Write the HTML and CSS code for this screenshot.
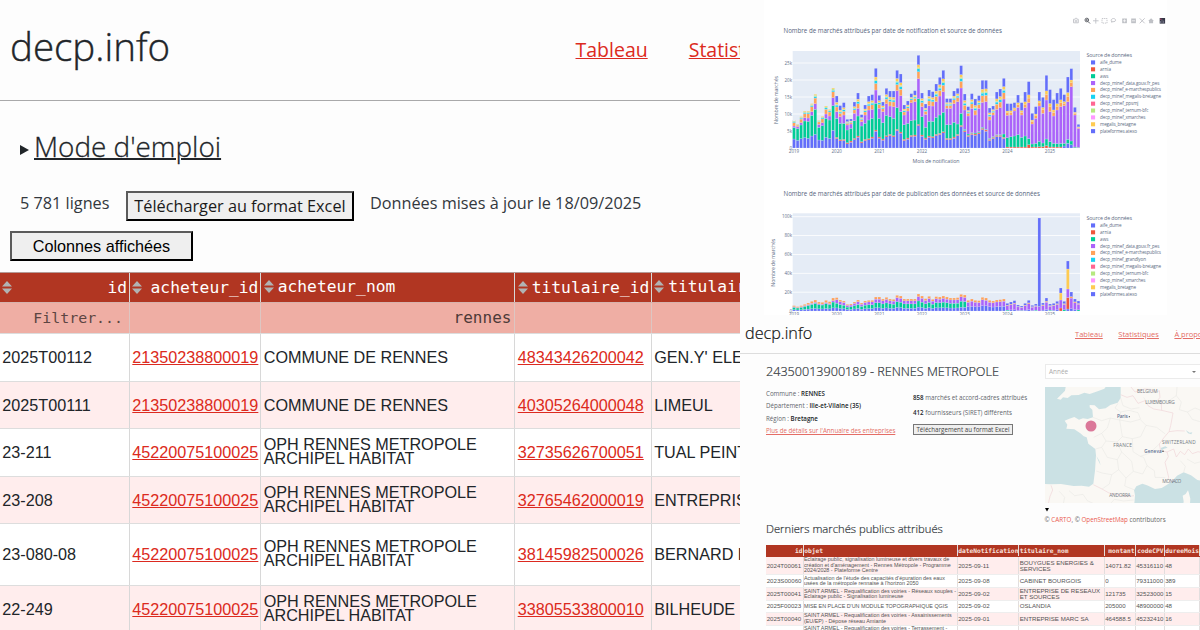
FILE: index.html
```html
<!DOCTYPE html>
<html lang="fr">
<head>
<meta charset="utf-8">
<title>decp.info</title>
<link rel="stylesheet" href="styles.css">
</head>
<body>
<main class="board">
  <section class="explorer">
    <header class="topbar">
      <div class="brand">decp.info</div>
      <nav class="nav"><a>Tableau</a><a>Statistiques</a></nav>
    </header>
    <div class="help"><svg class="tri" viewBox="0 0 9 10"><path d="M0 0L9 5L0 10Z"/></svg><span class="help-title">Mode d'emploi</span></div>
    <div class="tools"><span class="count">5 781 lignes</span><button class="btn download">Télécharger au format Excel</button><span class="updated">Données mises à jour le 18/09/2025</span></div>
    <button class="btn columns">Colonnes affichées</button>
    <div class="grid">
      <div class="row head">
        <div class="c right"><svg class="sort" viewBox="0 0 10 13"><path d="M0 5.5L5 0L10 5.5ZM0 7.5L5 13L10 7.5Z"/></svg>id</div>
        <div class="c right"><svg class="sort" viewBox="0 0 10 13"><path d="M0 5.5L5 0L10 5.5ZM0 7.5L5 13L10 7.5Z"/></svg>acheteur_id</div>
        <div class="c up"><svg class="sort" viewBox="0 0 10 13"><path d="M0 5.5L5 0L10 5.5ZM0 7.5L5 13L10 7.5Z"/></svg>acheteur_nom</div>
        <div class="c right"><svg class="sort" viewBox="0 0 10 13"><path d="M0 5.5L5 0L10 5.5ZM0 7.5L5 13L10 7.5Z"/></svg>titulaire_id</div>
        <div class="c up"><svg class="sort" viewBox="0 0 10 13"><path d="M0 5.5L5 0L10 5.5ZM0 7.5L5 13L10 7.5Z"/></svg>titulaire_nom</div>
      </div>
      <div class="row filter"><div class="c hint">Filtrer...</div><div class="c"></div><div class="c">rennes</div><div class="c"></div><div class="c"></div></div>
      <div class="row"><div class="c">2025T00112</div><div class="c"><a>21350238800019</a></div><div class="c">COMMUNE DE RENNES</div><div class="c"><a>48343426200042</a></div><div class="c">GEN.Y' ELEC</div></div>
      <div class="row odd"><div class="c">2025T00111</div><div class="c"><a>21350238800019</a></div><div class="c">COMMUNE DE RENNES</div><div class="c"><a>40305264000048</a></div><div class="c">LIMEUL</div></div>
      <div class="row"><div class="c">23-211</div><div class="c"><a>45220075100025</a></div><div class="c two">OPH RENNES METROPOLE<br>ARCHIPEL HABITAT</div><div class="c"><a>32735626700051</a></div><div class="c">TUAL PEINTURE</div></div>
      <div class="row odd"><div class="c">23-208</div><div class="c"><a>45220075100025</a></div><div class="c two">OPH RENNES METROPOLE<br>ARCHIPEL HABITAT</div><div class="c"><a>32765462000019</a></div><div class="c">ENTREPRISE</div></div>
      <div class="row tall"><div class="c">23-080-08</div><div class="c"><a>45220075100025</a></div><div class="c two">OPH RENNES METROPOLE<br>ARCHIPEL HABITAT</div><div class="c"><a>38145982500026</a></div><div class="c">BERNARD ET</div></div>
      <div class="row odd"><div class="c">22-249</div><div class="c"><a>45220075100025</a></div><div class="c two">OPH RENNES METROPOLE<br>ARCHIPEL HABITAT</div><div class="c"><a>33805533800010</a></div><div class="c">BILHEUDE</div></div>
    </div>
  </section>

  <div class="side">
    <section class="stats">
      <svg id="stats" class="stats-svg" viewBox="764 0 403 315"></svg>
    </section>

    <section class="buyer">
      <header class="mini-top">
        <div class="mini-brand">decp.info</div>
        <nav class="mini-nav"><a>Tableau</a><a>Statistiques</a><a>À propos</a></nav>
      </header>
      <div class="profile">
        <div class="facts">
          <h2 class="name">24350013900189 - RENNES METROPOLE</h2>
          <div class="cols">
            <div class="ident">
              <p>Commune : <b>RENNES</b></p>
              <p>Département : <b>Ille-et-Vilaine (35)</b></p>
              <p>Région : <b>Bretagne</b></p>
              <p><a class="soft">Plus de détails sur l'Annuaire des entreprises</a></p>
            </div>
            <div class="totals">
              <p><b>858</b> marchés et accord-cadres attribués</p>
              <p><b>412</b> fournisseurs (SIRET) différents</p>
              <button class="mini-btn">Téléchargement au format Excel</button>
            </div>
          </div>
        </div>
        <div class="where">
          <div class="select"><span>Année</span><i class="caret"></i></div>
          <svg class="map" viewBox="44 139 468 350">
            <rect x="44" y="139" width="468" height="350" fill="#faf8f4"/>
            <path fill="#cbe1e4" d="M44 139H106L104 150L92 162L80 174L91 177L98 170L112 172L123 164L145 163L162 156L178 160L204 151L222 144L226 139H271V172L262 186L240 193L226 203L206 206L193 194L178 193L178 200L186 207L188 230L172 235L158 233L146 237L132 229L115 235L103 240L111 252L108 264L132 266L150 278L160 287L169 290L174 309L195 325L197 344L194 390L189 429L176 438L154 435L130 436L92 430L62 431L44 430Z"/>
            <path fill="#cbe1e4" d="M312 489L314 464L311 449L318 437L336 429L350 434L374 445L394 442L410 432L424 423L440 405L460 395L482 404L501 418L512 420V489H479L480 474L475 455L473 449L466 460L457 465L460 482L459 489Z"/>
            <path fill="#cbe1e4" d="M466 268L478 276L486 275L483 281L473 278ZM391 322L405 317L412 321L401 324L394 329ZM198 346L207 360L211 374L204 360Z"/>
            <g fill="none" stroke="#f0d4d8" stroke-width="2">
              <path d="M271 162L290 170L308 165L323 188L344 180L353 195L370 205L394 209L428 217L421 255L416 273L400 292L387 310L391 330L410 334L414 348L404 365L410 389L415 410L409 425"/>
              <path d="M302 139L314 154L342 145L360 146L376 155L387 150L389 170L381 180L393 190L394 209M416 273L440 270L463 271M410 334L430 325L438 349L450 332L463 342L474 325L486 339L503 333L512 335M189 432L215 445L236 457L263 462L291 468L311 465M62 434L67 448L59 467L54 489"/>
            </g>
            <g fill="none" stroke="#e7e7e3" stroke-width="1.6">
              <path d="M188 230L214 240L240 232L268 238L301 244L329 236L347 254L379 260L405 280M268 238L271 214L254 202L263 188M271 214L296 209L323 216L331 236M271 172L278 195L303 205L327 201M190 290L214 278L231 262L240 232M214 278L227 301L214 320L195 325M227 301L260 304L276 288L268 238M260 304L274 334L261 357L231 350L214 320M276 288L306 294L331 288L347 254M306 294L308 333L330 347L357 338L387 310M261 357L265 387L244 402L215 397L198 391M265 387L287 412L283 436L311 447M287 412L309 392L337 400L350 375L340 350L330 347M350 375L372 390L374 410L405 411M309 392L304 362L274 334M244 402L237 430L215 445M87 452L103 470L99 489M116 450L133 465L158 461L171 480L190 489M340 170L352 190M440 139L438 165L453 184L447 207L471 214L486 236L512 244M471 214L494 202L512 209M438 165L410 184M450 360L465 377L460 395M470 355L493 368L512 363M240 489L252 476L280 481L310 478"/>
            </g>
            <g class="map-country">
              <text x="320" y="156" textLength="62">BELGIUM</text><text x="345" y="190" textLength="88">LUXEMBOURG</text>
              <text x="249" y="318" textLength="56">FRANCE</text><text x="395" y="311" textLength="101">SWITZERLAND</text>
              <text x="396" y="426" textLength="57">MONACO</text><text x="237" y="470" textLength="64">ANDORRA</text>
            </g>
            <g class="map-city"><text x="260" y="233" textLength="32">Paris</text><text x="342" y="337" textLength="52">Geneva</text></g>
            <circle cx="297" cy="228" r="2" fill="#555"/><circle cx="398" cy="332" r="2.3" fill="#333"/>
            <circle cx="182" cy="256" r="16.5" fill="#db7899"/>
          </svg>
          <svg class="drop" viewBox="0 0 10 9"><path d="M0 0H10L5 9Z"/></svg>
          <div class="credit">© <a>CARTO</a>, © <a>OpenStreetMap</a> contributors</div>
        </div>
      </div>
      <h3 class="latest">Derniers marchés publics attribués</h3>
      <div class="mini">
        <div class="mr mh"><div class="right">id</div><div>objet</div><div>dateNotification</div><div>titulaire_nom</div><div class="right">montant</div><div class="right">codeCPV</div><div>dureeMois</div></div>
        <div class="mr pink h18"><div>2024T00061</div><div class="obj">Eclairage public, signalisation lumineuse et divers travaux de<br>création et d'aménagement - Rennes Métropole - Programme<br>2024/2028 - Plateforme Centre</div><div>2025-09-11</div><div>BOUYGUES ENERGIES &amp;<br>SERVICES</div><div>14071.82</div><div>45316110</div><div>48</div></div>
        <div class="mr"><div>2023S00060</div><div class="obj">Actualisation de l'étude des capacités d'épuration des eaux<br>usées de la métropole rennaise à l'horizon 2050</div><div>2025-09-08</div><div>CABINET BOURGOIS</div><div>0</div><div>79311000</div><div>389</div></div>
        <div class="mr pink"><div>2025T00041</div><div class="obj">SAINT ARMEL - Requalification des voiries - Réseaux souples -<br>Eclairage public - Signalisation lumineuse</div><div>2025-09-02</div><div>ENTREPRISE DE RESEAUX<br>ET SOURCES</div><div>121735</div><div>32523000</div><div>15</div></div>
        <div class="mr h11"><div>2025F00023</div><div class="obj">MISE EN PLACE D'UN MODULE TOPOGRAPHIQUE QGIS</div><div>2025-09-02</div><div>OSLANDIA</div><div>205000</div><div>48900000</div><div>48</div></div>
        <div class="mr pink"><div>2025T00040</div><div class="obj">SAINT ARMEL - Requalification des voiries - Assainissements<br>(EU/EP) - Dépose réseau Amiante</div><div>2025-09-01</div><div>ENTREPRISE MARC SA</div><div>464588.5</div><div>45232410</div><div>16</div></div>
        <div class="mr"><div>2025T00039</div><div class="obj">SAINT ARMEL - Requalification des voiries - Terrassement -<br>Voirie</div><div>2025-09-01</div><div>ERTP KERAVIS</div><div>904010.5</div><div>45112500</div><div>16</div></div>
      </div>
    </section>
  </div>
</main>
<script src="charts.js"></script>
</body>
</html>
```

FILE: styles.css
```css
* { box-sizing: border-box; }
body { margin: 0; background: #fdfdfd; font-family: "Open Sans", sans-serif; color: #212529; }
p, h2, h3 { margin: 0; font-weight: 400; }
a { color: #dc2a20; text-decoration: underline; }
.board { display: flex; width: 1200px; height: 630px; overflow: hidden; }

.explorer { flex: none; width: 740px; height: 630px; overflow: hidden; display: flex; flex-direction: column; align-items: flex-start; }
.explorer > * { flex: none; }
.topbar { width: 740px; height: 101px; border-bottom: 1px solid #a9a9aa; padding: 0 0 8px 10px; display: flex; align-items: center; overflow: hidden; }
.brand { width: 565.5px; flex: none; font-size: 38.5px; font-weight: 300; -webkit-text-stroke: .4px #212529; line-height: 50px; padding-bottom: 1px; }
.nav { display: flex; gap: 41px; font-size: 19.5px; line-height: 28px; padding-top: 7px; }
.help { display: flex; align-items: center; height: 90px; padding: 0 0 1px 20px; }
.tri { width: 9px; height: 10px; margin: 9px 5px 0 0; fill: #212529; }
.help-title { font-size: 27.9px; font-weight: 300; -webkit-text-stroke: .3px #212529; line-height: 36px; text-decoration: underline; text-decoration-thickness: 2px; }
.tools { display: flex; height: 30px; padding-left: 20px; font-size: 16.25px; line-height: 24px; white-space: nowrap; color: #33383d; }
.count { width: 106px; }
.updated { margin-left: 16px; }
.btn { font-family: inherit; color: #000; background: #efefef; border: 2px solid; border-color: #5b5b5b #000 #000 #5b5b5b; border-radius: 0; padding: 0; white-space: nowrap; }
.download { width: 228px; height: 30px; font-size: 16.25px; line-height: 26px; color: #1a1a1a; }
.columns { width: 183px; height: 30px; margin: 10px 0 0 10px; font: 16.2px/26px "Liberation Sans", sans-serif; }

.grid { margin-top: 11px; width: 800px; border-top: 1px solid #b59a96; font: 16.2px/20px "Liberation Sans", sans-serif; }
.row { display: grid; grid-template-columns: 130px 131.4px 254px 136.5px 148.1px; height: 47.5px; border-bottom: 1px solid #ddd; background: #fff; }
.c { display: flex; align-items: center; padding-left: 2.3px; border-right: 1px solid #d8d8d8; white-space: nowrap; overflow: hidden; }
.odd { background: #ffeded; }
.tall { height: 61.5px; }
.two { line-height: 14px; padding-bottom: 2px; }
.head { height: 30px; background: #b13622; color: #fff; border-color: #d6b2ac; font-family: "DejaVu Sans Mono", monospace; font-size: 16.3px; }
.sort { flex: none; width: 10px; height: 13px; fill: #b1b3b3; margin-right: 4px; }
.right { justify-content: space-between; padding-right: 2px; }
.up { padding-bottom: 2px; }
.filter { height: 31px; background: #efaea4; color: #4d3a38; font-family: "DejaVu Sans Mono", monospace; font-size: 16px; }
.filter .c { justify-content: flex-end; padding-right: 3px; border-color: #ddc6c2; }
.filter .hint { padding-right: 6px; color: #5d4542; font-size: 14.9px; }

.side { flex: none; width: 460px; height: 630px; overflow: hidden; display: flex; flex-direction: column; }
.stats { flex: none; height: 315px; padding-left: 24px; }
.stats-svg { display: block; width: 403px; height: 315px; background: #fff; font-family: "Open Sans", sans-serif; }
.tick { font-size: 4.5px; fill: #61708a; }
.title { font-size: 6.2px; fill: #56647d; }
.axis { font-size: 5.3px; fill: #5e6c84; }
.leg { font-size: 4.6px; fill: #5e6c84; }

.buyer { width: 460px; }
.mini-top { height: 39px; border-bottom: 1px solid #ddd; padding-left: 5px; display: flex; align-items: center; white-space: nowrap; }
.mini-brand { width: 330px; flex: none; font-size: 16.2px; font-weight: 300; -webkit-text-stroke: .2px #111; line-height: 22px; padding-bottom: 3px; color: #111; }
.mini-nav { display: flex; gap: 15.5px; font-size: 7.5px; }
.mini-nav a, .soft { color: #e46d66; }
.profile { display: flex; height: 165px; padding-left: 26px; white-space: nowrap; }
.facts { width: 278.5px; flex: none; }
.name { font-size: 12.6px; font-weight: 300; -webkit-text-stroke: .2px #30353a; line-height: 18px; padding-top: 9.2px; color: #30353a; }
.cols { display: flex; font-size: 6.2px; color: #5f656c; }
.cols b { color: #212529; font-weight: 600; }
.ident { width: 147px; padding-top: 6.8px; line-height: 12.5px; }
.totals { padding-top: 8.4px; line-height: 15.7px; }
.mini-btn { display: block; width: 100px; height: 11px; margin-top: 2.6px; padding: 0; border: 1px solid #777; background: #efefef; font: 6.2px/9px "Open Sans", sans-serif; color: #444; }
.where { width: 156px; padding-top: 10px; }
.select { height: 15px; border: 1px solid #ebebeb; background: #fff; display: flex; align-items: center; justify-content: space-between; padding: 0 4px 0 3.5px; font-size: 6.4px; color: #aaa; }
.caret { border: 2px solid transparent; border-top-color: #777; border-bottom: 0; }
.map { display: block; width: 156px; height: 116.7px; margin-top: 7.5px; font-family: "Open Sans", sans-serif; }
.map-country { font-size: 14.5px; fill: #747982; }
.map-city { font-size: 14px; font-weight: 600; fill: #5d6f93; }
.drop { display: block; width: 4px; height: 3.6px; margin-top: 5px; }
.credit { font-size: 6.25px; line-height: 10px; margin-top: 2.8px; color: #666; }
.credit a { color: #ea5a50; text-decoration: none; }
.latest { font-size: 11.25px; font-weight: 300; -webkit-text-stroke: .2px #30353a; line-height: 16px; padding: 2px 0 0 26px; color: #30353a; }
.mini { margin: 8px 0 0 26px; width: 434px; font: 6.15px/6px "Liberation Sans", sans-serif; color: #555; }
.mr { display: grid; grid-template-columns: 37.5px 154px 61.5px 85.5px 31px 29px 35.5px; height: 13px; border-bottom: 1px solid #eee; background: #fff; white-space: nowrap; }
.mr > div { display: flex; align-items: center; padding-left: .7px; border-right: 1px solid #e2dede; overflow: hidden; }
.mr > .right { justify-content: flex-end; padding-right: 0; }
.mr > .obj { font-size: 5.4px; line-height: 5.4px; padding-left: .4px; }
.mh { height: 12px; background: #b13622; color: #f8e3df; font-family: "DejaVu Sans Mono", monospace; font-weight: 700; font-size: 6.25px; border-color: #b13622; }
.pink { background: #ffeded; }
.h18 { height: 18px; }
.h11 { height: 11.5px; }
```

FILE: charts.js
```js
const NS = "http://www.w3.org/2000/svg";
const svg = document.getElementById("stats");
const C = { blue: "#636efa", red: "#ef553b", green: "#00cc96", purple: "#ab63fa", orange: "#ffa15a", cyan: "#19d3f3", pink: "#ff6692", lime: "#b6e880", rose: "#ff97ff", yellow: "#fecb52" };

function add(tag, attrs, text) {
  const el = document.createElementNS(NS, tag);
  for (const k in attrs) el.setAttribute(k, attrs[k]);
  if (text !== undefined) el.textContent = text;
  svg.appendChild(el);
}
function label(x, y, text, cls, width, anchor) {
  const a = { x, y, class: cls };
  if (width) a.textLength = width;
  if (anchor) a["text-anchor"] = anchor;
  add("text", a, text);
}

const X0 = 794, STEP = 3.556, W = 2.85;
function stack(i, base, parts) {
  let y = base;
  for (const [color, h] of parts) {
    if (h <= 0) continue;
    add("rect", { x: X0 + i * STEP - W / 2, y: y - h, width: W, height: h, fill: color, stroke: "#e5ecf6", "stroke-width": 0.2 });
    y -= h;
  }
}

function frame(top, base, ticks, gap, title, titleY, titleW, axisX, legendY, names) {
  label(783.5, titleY, title, "title", titleW);
  add("rect", { x: 792.7, y: top, width: 287.3, height: base - top, fill: "#e5ecf6" });
  ticks.forEach((t, i) => {
    if (i) add("rect", { x: 792.7, y: base - i * gap - 0.4, width: 287.3, height: 0.8, fill: "#fff" });
    label(792, base - i * gap + 1.5, t, "tick", 0, "end");
  });
  for (let i = 0; i < 7; i++) label(X0 + i * 42.67, base + 4.8, String(2019 + i), "tick", 0, "middle");
  add("text", { transform: `translate(${axisX} ${(top + base) / 2 + 0.5}) rotate(-90)`, "text-anchor": "middle", class: "axis", textLength: 48 }, "Nombre de marchés");
  label(1086.5, legendY, "Source de données", "axis", 45.5);
  const colors = [C.blue, C.red, C.green, C.purple, C.orange, C.cyan, C.pink, C.lime, C.rose, C.yellow, C.blue];
  names.forEach(([n, w], i) => {
    const y = legendY + 3.4 + i * 6.87;
    add("rect", { x: 1091, y, width: 4.1, height: 4.1, fill: colors[i] });
    label(1100, y + 3.5, n, "leg", w);
  });
}

/* Heights in thirds of a pixel: total, blue, green top, purple top */
const notif = `83 27 61 66|72 23 58 64|94 28 69 76|111 31 81 91|111 29 80 90|133 36 98 109|161 41 116 133|83 24 62 71|95 23 67 76|126 32 89 102|116 29 84 96|180 53 127 151
156 32 89 109|127 25 74 94|136 26 74 99|86 16 54 69|87 21 59 72|138 29 82 104|165 36 96 119|100 19 66 79|129 26 74 99|156 28 84 114|160 33 89 116|239 54 134 174
158 33 89 119|138 27 76 109|179 37 98 133|171 41 94 126|171 37 89 124|233 56 121 172|222 48 109 157|129 26 70 99|141 30 74 111|163 38 82 136|172 39 84 139|278 71 148 208
165 39 94 124|132 30 62 101|174 36 80 127|169 34 80 126|192 41 92 139|212 44 99 156|233 49 107 169|148 29 70 119|148 29 70 119|171 33 77 133|179 41 72 139|247 68 104 180
162 52 56 114|124 38 42 96|163 44 46 119|147 42 45 99|157 46 49 119|203 59 62 137|203 54 56 139|120 26 29 84|126 32 34 99|168 38 40 116|177 38 40 121|209 32 42 147
133 3 31 98|133 3 34 99|136 3 36 111|159 3 40 122|136 3 32 99|168 3 36 121|199 10 28 136|104 3 12 72|124 3 14 89|168 4 20 126|152 4 15 104|218 7 27 144
175 3 19 109|145 3 14 96|165 3 13 114|179 3 14 124|160 6 14 127|213 14 26 139|238 10 21 184|122 1 3 99|71 1 2 59`.split(/[|\n]/).map(s => s.split(" ").map(v => +v / 3));

frame(51, 148, ["0", "5k", "10k", "15k", "20k", "25k"], 17, "Nombre de marchés attribués par date de notification et source de données", 32.6, 218.5, 777.5, 57, [
  ["aife_dume", 21.5], ["arnia", 11], ["aws", 8.5], ["decp_minef_data.gouv.fr_pes", 59.5], ["decp_minef_e-marchespublics", 61], ["decp_minef_megalis-bretagne", 61], ["decp_minef_ppsmj", 38.5], ["decp_minef_ternum-bfc", 48.5], ["decp_minef_xmarches", 45.5], ["megalis_bretagne", 36], ["plateformes atexo", 37]]);
notif.forEach(([total, blue, green, purple], i) => {
  const r = total - purple;
  const late = i >= 60;
  const redH = i > 11 ? Math.min(1.2, green * 0.15) : 0;
  const parts = late ? [[C.red, blue]] : [[C.blue, blue - redH], [C.red, redH]];
  if (i === 76 || i === 77 || i === 78) parts[0] = [C.blue, blue];
  parts.push([C.green, green - blue], [C.purple, purple - green]);
  if (i < 12) parts.push([C.orange, r * 0.6], [C.cyan, r * 0.16], [C.lime, r * 0.14], [C.yellow, r * 0.1]);
  else if (late) parts.push([C.orange, r * 0.22], [C.yellow, r * 0.15], [C.blue, r * 0.63]);
  else parts.push([C.orange, r * 0.3], [C.cyan, r * 0.12], [C.lime, r * 0.05], [C.yellow, r * 0.13], [C.blue, r * 0.4]);
  stack(i, 148, parts);
});
label(912.5, 163, "Mois de notification", "axis", 47);

/* Toolbar above the first chart */
const g = "#bfc1c6";
const line = (d, color = g, w = 0.9) => add("path", { d, fill: "none", stroke: color, "stroke-width": w });
line("M1073.5 19.3h1.3l.6-1h1.4l.6 1h.9v3.5h-4.8zM1075 21a1 1 0 1 0 2 0a1 1 0 1 0-2 0");
line("M1085 20a1.8 1.8 0 1 0 3.6 0a1.8 1.8 0 1 0-3.6 0M1088 21.5l2 2M1086 20h1.6M1086.8 19.2v1.6", "#62656b", 1);
line("M1093 20.8h5.6M1095.8 18v5.6");
add("rect", { x: 1102, y: 18.5, width: 5, height: 4.6, fill: "none", stroke: g, "stroke-width": 0.9, "stroke-dasharray": "1.3 .8" });
line("M1112 22.8l-.8-2.3c0-2.8 4.5-2.4 4.4-.3c-.2 1.7-2.7 2-3.8.8");
add("rect", { x: 1122.2, y: 18.5, width: 4.7, height: 4.7, fill: g });
line("M1123 20.8h3M1124.5 19.3v3", "#fff", 0.7);
add("rect", { x: 1131.2, y: 18.5, width: 4.7, height: 4.7, fill: g });
line("M1132 20.8h3", "#fff", 0.7);
line("M1139.7 18.3l5 5M1144.7 18.3l-5 5");
add("path", { d: "M1148.2 21l2.9-2.8 2.8 2.8h-.8v2.2h-4v-2.2z", fill: g });
add("rect", { x: 1159.7, y: 18, width: 5.4, height: 5.6, fill: "#343544" });
line("M1160.5 23v-2M1162 23v-3.5M1163.6 23v-2.4", "#999bb0", 0.6);
add("rect", { x: 1160.2, y: 18.6, width: 1.2, height: 1.2, fill: "#c45078" });

/* Publication chart: total heights, in thirds of a pixel */
const pub = [16,13,16,20,24,29,33,27,26,32,28,39,40,33,30,20,21,27,33,24,30,32,32,42,42,36,41,36,35,47,45,36,36,36,36,51,45,37,44,35,43,42,45,42,39,39,40,50,48,32,36,32,31,41,39,32,30,33,34,36,23,27,31,18,15,23,32,17,21,279,24,39,21,23,29,69,29,150,57,36,30];
frame(213.3, 311, ["0", "20k", "40k", "60k", "80k", "100k"], 18.85, "Nombre de marchés attribués par date de publication des données et source de données", 195.5, 256.5, 775, 220, [
  ["aife_dume", 21.5], ["arnia", 11], ["aws", 8.5], ["decp_minef_data.gouv.fr_pes", 59.5], ["decp_minef_e-marchespublics", 61], ["decp_minef_grandlyon", 46], ["decp_minef_megalis-bretagne", 61], ["decp_minef_ternum-bfc", 48.5], ["decp_minef_xmarches", 45.5], ["megalis_bretagne", 36], ["plateformes atexo", 37]]);
pub.forEach((v, i) => {
  const h = v / 3;
  let parts;
  if (i === 69) parts = [[C.purple, 4.5], [C.blue, h - 4.5]];
  else if (i === 77) parts = [[C.blue, 2], [C.red, 11.5], [C.purple, 8.5], [C.yellow, 20], [C.blue, 8]];
  else if (i === 75) parts = [[C.red, 3], [C.purple, 8], [C.yellow, 7], [C.blue, 5]];
  else if (i > 59) parts = [[i % 4 ? C.blue : C.green, h * 0.12], [C.purple, h * 0.56], [C.orange, h * 0.08], [C.blue, h * 0.24]];
  else if (i > 48) parts = [[C.blue, h * 0.4], [C.purple, h * 0.42], [C.orange, h * 0.18]];
  else if (i < 12) parts = [[C.blue, h * 0.24], [C.green, h * 0.45], [C.purple, h * 0.1], [C.orange, h * 0.21]];
  else parts = [[C.blue, h * 0.23], [C.green, h * 0.36], [C.purple, h * 0.26], [C.orange, h * 0.15]];
  stack(i, 311, parts);
});
```
